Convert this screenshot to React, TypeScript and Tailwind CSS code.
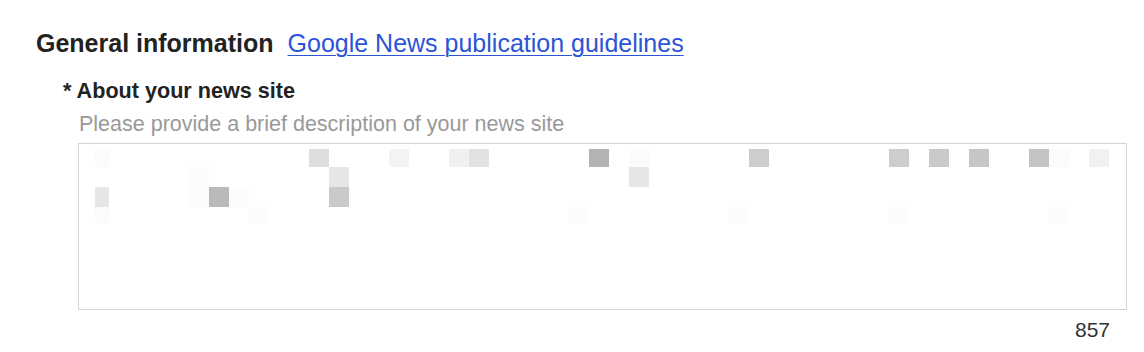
import React from "react";

type Cell = [number, string];

const rows: { h: string; cells: Cell[] }[] = [
  {
    h: "h-[18px]",
    cells: [
      [0, "#fbfbfb"],
      [11, "#dedede"],
      [15, "#f3f3f3"],
      [18, "#f0f0f0"],
      [19, "#e2e2e2"],
      [25, "#b3b3b3"],
      [27, "#fbfbfb"],
      [33, "#cdcdcd"],
      [40, "#cdcdcd"],
      [42, "#c8c9c8"],
      [44, "#c6c6c6"],
      [47, "#c4c4c4"],
      [48, "#fbfbfb"],
      [50, "#f0f1f0"],
    ],
  },
  {
    h: "h-[20px]",
    cells: [
      [5, "#fcfcfc"],
      [12, "#e6e6e6"],
      [27, "#e6e6e6"],
    ],
  },
  {
    h: "h-[20px]",
    cells: [
      [0, "#e6e6e6"],
      [5, "#fcfcfc"],
      [6, "#bababa"],
      [7, "#fbfcfb"],
      [12, "#c8c9c8"],
    ],
  },
  {
    h: "h-[16px]",
    cells: [
      [0, "#fbfbfb"],
      [8, "#fcfcfc"],
      [24, "#fcfcfc"],
      [32, "#fcfcfc"],
      [40, "#fcfcfc"],
      [48, "#fcfcfc"],
    ],
  },
];

function Row({ h, cells }: { h: string; cells: Cell[] }) {
  const map = new Map(cells);
  return (
    <div className={`flex ${h}`}>
      {Array.from({ length: 51 }, (_, k) => {
        const c = map.get(k);
        if (k === 0) {
          return (
            <div key={k} className="w-[20px] h-full shrink-0 flex">
              <div className="w-[6px]" />
              <div className="w-[14px] h-full" style={{ background: c ?? "transparent" }} />
            </div>
          );
        }
        return (
          <div
            key={k}
            className="w-[20px] h-full shrink-0"
            style={{ background: c ?? "transparent" }}
          />
        );
      })}
    </div>
  );
}

export default function App() {
  return (
    <div className="w-[1144px] h-[352px] bg-white font-['Liberation_Sans',Arial,sans-serif] overflow-hidden">
      <div className="pl-[36px] pt-[28px]">
        <div className="flex items-baseline gap-[14px] h-[30px] leading-[30px]">
          <span className="text-[25px] font-bold text-[#222]">General information</span>
          <a className="text-[25px] text-[#2b54d6] underline decoration-1 underline-offset-[3px]" href="#">
            Google News publication guidelines
          </a>
        </div>
        <div className="ml-[27px] mt-[20px]">
          <div className="text-[21.6px] font-bold text-[#222] leading-[26px] h-[26px]">* About your news site</div>
          <div className="ml-[16px] mt-[7px] text-[21.5px] text-[#999] leading-[26px] h-[26px]">
            Please provide a brief description of your news site
          </div>
          <div className="ml-[15px] mt-[6px] w-[1049px] h-[167px] border border-[#d4d4d4] pl-[10px] pt-[5px]">
            {rows.map((r, i) => (
              <Row key={i} h={r.h} cells={r.cells} />
            ))}
          </div>
          <div className="w-[1049px] ml-[15px] flex justify-end pr-[17px] mt-[8px] text-[21px] text-[#333] leading-[24px]">
            857
          </div>
        </div>
      </div>
    </div>
  );
}
